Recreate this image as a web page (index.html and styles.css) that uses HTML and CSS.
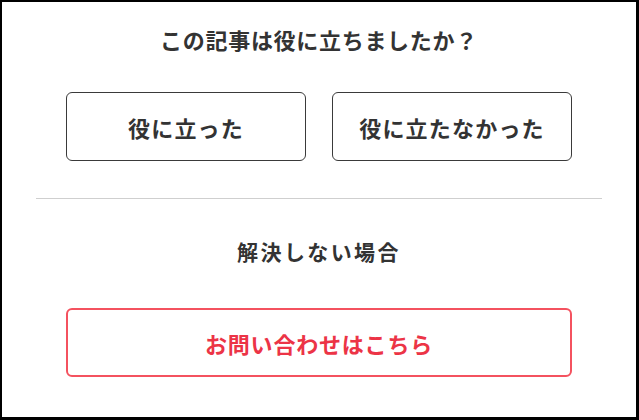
FILE: index.html
```html
<!DOCTYPE html>
<html lang="ja">
<head>
<meta charset="utf-8">
<link rel="stylesheet" href="styles.css">
</head>
<body>
<div class="page">
  <div class="feedback">
    <p class="title">この記事は役に立ちましたか？</p>
    <div class="choices">
      <button class="choice">役に立った</button>
      <button class="choice">役に立たなかった</button>
    </div>
  </div>
  <hr class="divider">
  <div class="support">
    <p class="subtitle">解決しない場合</p>
    <a class="contact" href="#">お問い合わせはこちら</a>
  </div>
</div>
</body>
</html>
```

FILE: styles.css
```css
html, body {
  margin: 0;
  padding: 0;
  background: #000;
}
body {
  font-family: "Noto Sans CJK JP", "Noto Sans", sans-serif;
  font-weight: 700;
  color: #333;
}
.page {
  margin: 2px 3px 3px 2px;
  height: 415px;
  background: #fff;
  padding: 0 34px;
  box-sizing: border-box;
  overflow: hidden;
}
.feedback {
  padding-top: 22px;
}
.title {
  margin: 0;
  height: 30px;
  line-height: 30px;
  font-size: 22px;
  text-align: center;
  letter-spacing: 0.7px;
}
.choices {
  margin: 38px 30px 0;
  display: grid;
  grid-template-columns: 1fr 1fr;
  gap: 26px;
}
.choice {
  height: 69px;
  border: 1px solid #3a3a3a;
  border-radius: 6px;
  background: #fff;
  font-family: inherit;
  font-weight: 700;
  font-size: 22px;
  letter-spacing: 1.2px;
  color: #333;
  padding: 0;
}
.divider {
  margin: 37px 0 0;
  border: 0;
  height: 1px;
  background: #cfcfcf;
}
.subtitle {
  margin: 37px 0 0;
  height: 30px;
  line-height: 30px;
  font-size: 21px;
  text-align: center;
  letter-spacing: 2.4px;
}
.contact {
  margin: 42px 30px 0;
  height: 69px;
  display: flex;
  align-items: center;
  justify-content: center;
  border: 2px solid #f4525f;
  border-radius: 6px;
  box-sizing: border-box;
  color: #ec3446;
  font-size: 22px;
  letter-spacing: 0.8px;
  text-decoration: none;
}
```
